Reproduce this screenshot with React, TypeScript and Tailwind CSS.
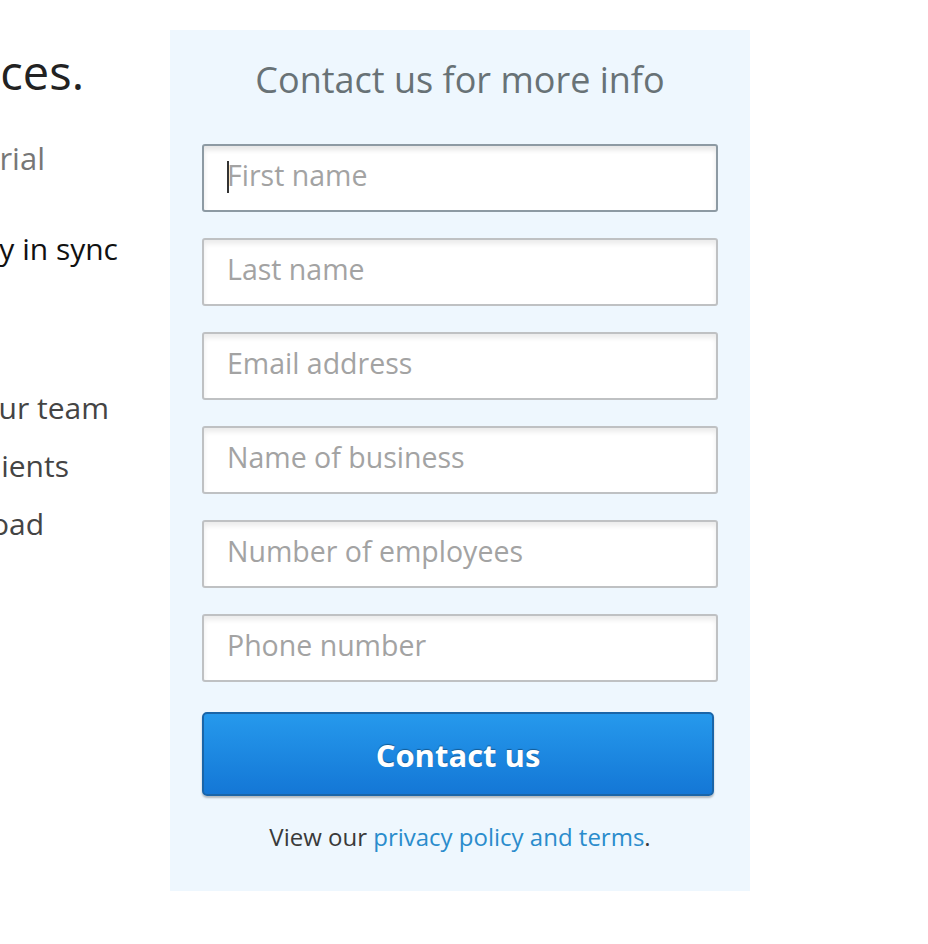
import React from "react";

const font = { fontFamily: '"Open Sans", "Noto Sans", sans-serif' };

function Clip({ w, className, children }: { w: string; className: string; children: React.ReactNode }) {
  return (
    <div className={`flex justify-end overflow-hidden ${w}`}>
      <span className={`whitespace-nowrap shrink-0 ${className}`}>{children}</span>
    </div>
  );
}

const fields = [
  "First name",
  "Last name",
  "Email address",
  "Name of business",
  "Number of employees",
  "Phone number",
];

export default function App() {
  return (
    <div className="w-[928px] h-[944px] bg-white flex overflow-hidden" style={font}>
      <div className="w-[170px] shrink-0 overflow-hidden flex flex-col">
        <div className="mt-[44px] h-[56px] flex items-center">
          <Clip w="w-[84px]" className="text-[47px] text-[#222]">Access from all your devices.</Clip>
        </div>
        <div className="mt-[37px] h-[42px] flex items-center">
          <Clip w="w-[45px]" className="text-[31px] text-[#777]">Start your free trial</Clip>
        </div>
        <div className="mt-[48px] h-[42px] flex items-center">
          <Clip w="w-[118px]" className="text-[30px] text-[#111]">Keep your files automatically in sync</Clip>
        </div>
        <div className="mt-[117px] h-[42px] flex items-center">
          <Clip w="w-[109px]" className="text-[30px] text-[#444]">Share with your team</Clip>
        </div>
        <div className="mt-[16px] h-[42px] flex items-center">
          <Clip w="w-[69px]" className="text-[30px] text-[#444]">Keep in touch with clients</Clip>
        </div>
        <div className="mt-[16px] h-[42px] flex items-center">
          <Clip w="w-[44px]" className="text-[30px] text-[#444]">Easy to download</Clip>
        </div>
      </div>

      <div className="w-[580px] shrink-0 mt-[30px] h-[861px] bg-[#eef7fe] px-[32px] flex flex-col">
        <h2 className="mt-[26px] text-center text-[36px] leading-[48px] text-[#687276]">
          Contact us for more info
        </h2>
        <div className="mt-[40px] flex flex-col gap-[26px]">
          {fields.map((f, i) => (
            <div
              key={f}
              className={
                i === 0
                  ? "h-[68px] w-[516px] rounded-[3px] border-2 border-[#8d9aa3] bg-white shadow-[inset_0_4px_5px_rgba(0,0,0,0.10)] flex items-center pl-[23px]"
                  : "h-[68px] w-[516px] rounded-[3px] border-2 border-[#bfc1c3] bg-white shadow-[inset_0_4px_5px_rgba(0,0,0,0.08)] flex items-center pl-[23px]"
              }
            >
              {i === 0 && <span className="w-[2px] h-[32px] bg-[#333] -mr-[2px] mt-[-2px]" />}
              <span className="text-[28.5px] text-[#a3a3a3] leading-none -mt-[5px]">{f}</span>
            </div>
          ))}
        </div>
        <button className="mt-[30px] h-[84px] w-[512px] rounded-[5px] border-2 border-[#1a65a8] bg-gradient-to-b from-[#2699ec] to-[#1477d6] shadow-[0_2px_2px_rgba(0,0,0,0.25)] flex items-center justify-center">
          <span className="text-[31px] font-bold text-white [text-shadow:0_-1px_1px_rgba(0,0,0,0.35)] mt-[2px]">
            Contact us
          </span>
        </button>
        <p className="mt-[23px] text-center text-[24px] text-[#3a3a3a]">
          View our <span className="text-[#2a8ccc]">privacy policy and terms</span>.
        </p>
      </div>
    </div>
  );
}
